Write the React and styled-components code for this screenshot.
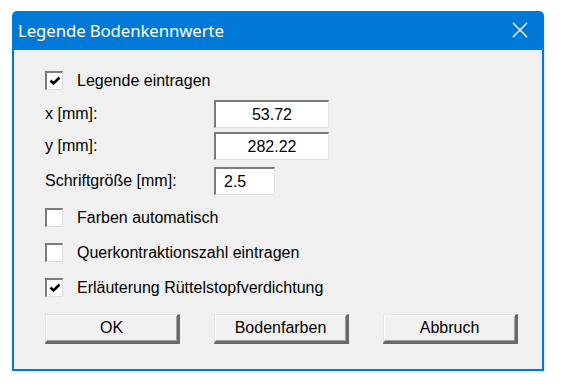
import React from "react";
import styled, { createGlobalStyle } from "styled-components";

const GlobalStyle = createGlobalStyle`
  html, body {
    margin: 0;
    padding: 0;
    background: #ffffff;
  }
  body {
    font-family: "Liberation Sans", Arial, sans-serif;
  }
`;

const fields = [
  { label: "x [mm]:", value: "53.72", wide: true, top: 10 },
  { label: "y [mm]:", value: "282.22", wide: true, top: 4 },
  { label: "Schriftgröße [mm]:", value: "2.5", wide: false, top: 7 },
];

const options = [
  { label: "Farben automatisch", checked: false, top: 13 },
  { label: "Querkontraktionszahl eintragen", checked: false, top: 16 },
  { label: "Erläuterung Rüttelstopfverdichtung", checked: true, top: 16 },
];

const CheckMark = () => (
  <svg width="12" height="12" viewBox="0 0 12 12">
    <path d="M1.5 5.5 L4.5 8.5 L10.5 2.5" fill="none" stroke="#000" strokeWidth="2.6" />
  </svg>
);

const CloseIcon = () => (
  <svg width="16" height="16" viewBox="0 0 16 16">
    <path d="M1 1 L15 15 M15 1 L1 15" stroke="#fff" strokeWidth="1.4" />
  </svg>
);

const CheckRow = ({ label, checked, top }) => (
  <Row $top={top}>
    <Box>{checked && <CheckMark />}</Box>
    <span>{label}</span>
  </Row>
);

const App = () => {
  return (
    <>
      <GlobalStyle />
      <Page>
        <Window>
          <TitleBar>
            <Title>Legende Bodenkennwerte</Title>
            <CloseButton>
              <CloseIcon />
            </CloseButton>
          </TitleBar>
          <Client>
            <CheckRow label="Legende eintragen" checked top={0} />
            {fields.map((f) => (
              <FieldRow key={f.label} $top={f.top}>
                <Label>{f.label}</Label>
                <Input $wide={f.wide}>{f.value}</Input>
              </FieldRow>
            ))}
            {options.map((o) => (
              <CheckRow key={o.label} {...o} />
            ))}
            <Buttons>
              <Button>OK</Button>
              <Button>Bodenfarben</Button>
              <Button>Abbruch</Button>
            </Buttons>
          </Client>
        </Window>
      </Page>
    </>
  );
};

const Page = styled.div`
  width: 562px;
  height: 388px;
  padding: 11px 0 0 12px;
  box-sizing: border-box;
`;

const Window = styled.div`
  width: 532px;
  height: 360px;
  background: #0078d7;
  border-radius: 5px 5px 0 0;
  padding: 0 2px 2px 2px;
  box-sizing: border-box;
  display: flex;
  flex-direction: column;
  box-shadow: 1px 1px 2px rgba(0, 0, 0, 0.12);
`;

const TitleBar = styled.div`
  height: 39px;
  display: flex;
  align-items: center;
  justify-content: space-between;
  padding: 0 14px 0 4px;
  flex-shrink: 0;
`;

const Title = styled.div`
  color: #ffffff;
  font-family: "Noto Sans", "Open Sans", sans-serif;
  font-size: 16.8px;
  letter-spacing: -0.1px;
  padding-bottom: 1px;
`;

const CloseButton = styled.div`
  display: flex;
  align-items: center;
  padding-bottom: 2px;
`;

const Client = styled.div`
  flex: 1;
  background: #f0f0f0;
  padding: 21px 0 0 31px;
  display: flex;
  flex-direction: column;
  color: #000;
  font-size: 16px;
`;

const Row = styled.div`
  display: flex;
  align-items: center;
  height: 19px;
  margin-top: ${(p) => p.$top}px;
  gap: 14px;
`;

const Box = styled.span`
  width: 18px;
  height: 19px;
  box-sizing: border-box;
  background: #ffffff;
  border-style: solid;
  border-width: 2px 1px 1px 2px;
  border-color: #7a7a7a #dcdcdc #dcdcdc #7a7a7a;
  display: flex;
  align-items: center;
  justify-content: center;
`;

const FieldRow = styled.div`
  display: flex;
  align-items: center;
  margin-top: ${(p) => p.$top}px;
`;

const Label = styled.span`
  width: 169px;
`;

const Input = styled.div`
  width: ${(p) => (p.$wide ? "115px" : "61px")};
  height: 28px;
  box-sizing: border-box;
  background: #ffffff;
  border-style: solid;
  border-width: 2px 1px 1px 2px;
  border-color: #7a7a7a #e3e3e3 #e3e3e3 #7a7a7a;
  display: flex;
  align-items: center;
  justify-content: ${(p) => (p.$wide ? "center" : "flex-start")};
  padding: ${(p) => (p.$wide ? "0" : "0 0 0 8px")};
`;

const Buttons = styled.div`
  display: flex;
  gap: 34px;
  margin-top: 17px;
`;

const Button = styled.div`
  width: 135px;
  height: 30px;
  box-sizing: border-box;
  background: #f0f0f0;
  border-style: solid;
  border-width: 1px 3px 3px 1px;
  border-color: #e3e3e3 #696969 #696969 #e3e3e3;
  box-shadow: inset 1px 1px #ffffff, inset -1px -1px #a0a0a0;
  display: flex;
  align-items: center;
  justify-content: center;
`;

export default App;
